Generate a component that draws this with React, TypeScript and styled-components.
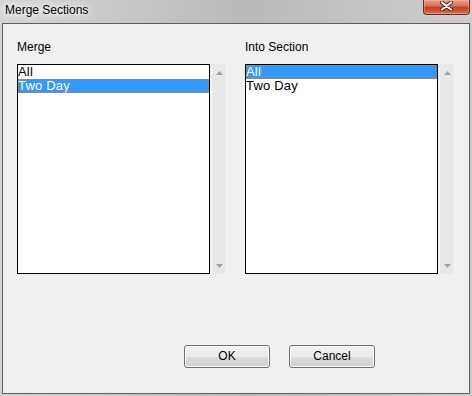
import styled, { createGlobalStyle } from 'styled-components';

const GlobalStyle = createGlobalStyle`
  html, body {
    margin: 0;
    padding: 0;
    background: #c8c8c8;
  }
  body {
    font-family: 'Liberation Sans', Arial, sans-serif;
    font-size: 12px;
    color: #000;
  }
`;

const Window = styled.div`
  width: 472px;
  height: 396px;
  box-sizing: border-box;
  padding: 0 2px 2px 2px;
  display: flex;
  flex-direction: column;
  background: linear-gradient(
    to right,
    #d4d4d4 0%,
    #c6c6c6 30%,
    #b9b9b9 52%,
    #c4c4c4 75%,
    #cdcdcd 100%
  );
`;

const TitleBar = styled.div`
  height: 23px;
  display: flex;
  align-items: flex-start;
  flex-shrink: 0;
`;

const Title = styled.span`
  padding: 3px 0 0 3px;
  line-height: 14px;
  font-size: 12px;
  text-shadow: 0 0 6px #fff, 0 0 10px #fff, 0 0 14px #fff;
`;

const CloseButton = styled.div`
  margin-left: auto;
  width: 47px;
  height: 15px;
  box-sizing: border-box;
  border: 1px solid #6e2a1e;
  border-top: none;
  border-radius: 0 0 4px 4px;
  background: linear-gradient(
    to bottom,
    #e9a08c 0%,
    #d9725b 40%,
    #c2412a 55%,
    #cf5a3d 85%,
    #e48a66 100%
  );
  box-shadow: inset 0 0 0 1px rgba(255, 200, 180, 0.35);
  display: flex;
  align-items: center;
  justify-content: center;
`;

const Client = styled.div`
  flex: 1;
  box-sizing: border-box;
  border: 1px solid #5e5e5e;
  background: #f0f0f0;
  padding: 16px 0 0 14px;
  display: flex;
  flex-direction: column;
`;

const Columns = styled.div`
  display: flex;
  gap: 18px;
`;

const Column = styled.div`
  display: flex;
  flex-direction: column;
`;

const Label = styled.div`
  line-height: 14px;
  margin-bottom: 10px;
`;

const ListRow = styled.div`
  display: flex;
  gap: 1px;
`;

const ListBox = styled.div`
  width: 193px;
  height: 210px;
  box-sizing: border-box;
  border: 1px solid #000;
  background: #fff;
`;

const Item = styled.div<{ $selected?: boolean }>`
  height: 14px;
  line-height: 14px;
  font-size: 13px;
  letter-spacing: 0.2px;
  box-sizing: border-box;
  white-space: nowrap;
  color: ${(p) => (p.$selected ? '#fff' : '#000')};
  background: ${(p) => (p.$selected ? '#3399ff' : 'transparent')};
  outline: ${(p) => (p.$selected ? '1px dotted #e07a10' : 'none')};
  outline-offset: -1px;
`;

const ScrollTrack = styled.div`
  width: 16px;
  height: 210px;
  box-sizing: border-box;
  border-left: 1px solid #f6f6f6;
  border-right: 1px solid #f6f6f6;
  background: #e8e8e8;
  display: flex;
  flex-direction: column;
  justify-content: space-between;
  align-items: center;
  padding: 7px 0 6px 0;
`;

const Buttons = styled.div`
  margin-top: 71px;
  padding-left: 167px;
  display: flex;
  gap: 19px;
`;

const Button = styled.button`
  width: 86px;
  height: 23px;
  box-sizing: border-box;
  border: 1px solid #707070;
  border-radius: 3px;
  background: linear-gradient(
    to bottom,
    #f2f2f2 0%,
    #ebebeb 50%,
    #dddddd 51%,
    #cfcfcf 100%
  );
  box-shadow: inset 0 0 0 1px #fcfcfc;
  font-family: 'Liberation Sans', Arial, sans-serif;
  font-size: 12px;
  color: #000;
  padding: 0;
  line-height: 21px;
`;

const Arrow = ({ down }: { down?: boolean }) => (
  <svg width="7" height="4" viewBox="0 0 7 4">
    <path d={down ? 'M0 0H7L3.5 4Z' : 'M0 4H7L3.5 0Z'} fill="#a3a3a3" />
  </svg>
);

const Scroll = () => (
  <ScrollTrack>
    <Arrow />
    <Arrow down />
  </ScrollTrack>
);

const CloseGlyph = () => (
  <svg width="13" height="10" viewBox="0 0 13 10" style={{ marginTop: -2 }}>
    <path d="M2 1.5L11 8.5M11 1.5L2 8.5" stroke="#5a1f16" strokeWidth="4" strokeLinecap="round" />
    <path d="M2 1.5L11 8.5M11 1.5L2 8.5" stroke="#fff" strokeWidth="2.2" strokeLinecap="round" />
  </svg>
);

const sections = ['All', 'Two Day'];

export default function App() {
  return (
    <>
      <GlobalStyle />
      <Window>
        <TitleBar>
          <Title>Merge Sections</Title>
          <CloseButton>
            <CloseGlyph />
          </CloseButton>
        </TitleBar>
        <Client>
          <Columns>
            <Column>
              <Label>Merge</Label>
              <ListRow>
                <ListBox>
                  {sections.map((s) => (
                    <Item key={s} $selected={s === 'Two Day'}>{s}</Item>
                  ))}
                </ListBox>
                <Scroll />
              </ListRow>
            </Column>
            <Column>
              <Label>Into Section</Label>
              <ListRow>
                <ListBox>
                  {sections.map((s) => (
                    <Item key={s} $selected={s === 'All'}>{s}</Item>
                  ))}
                </ListBox>
                <Scroll />
              </ListRow>
            </Column>
          </Columns>
          <Buttons>
            <Button>OK</Button>
            <Button>Cancel</Button>
          </Buttons>
        </Client>
      </Window>
    </>
  );
}
